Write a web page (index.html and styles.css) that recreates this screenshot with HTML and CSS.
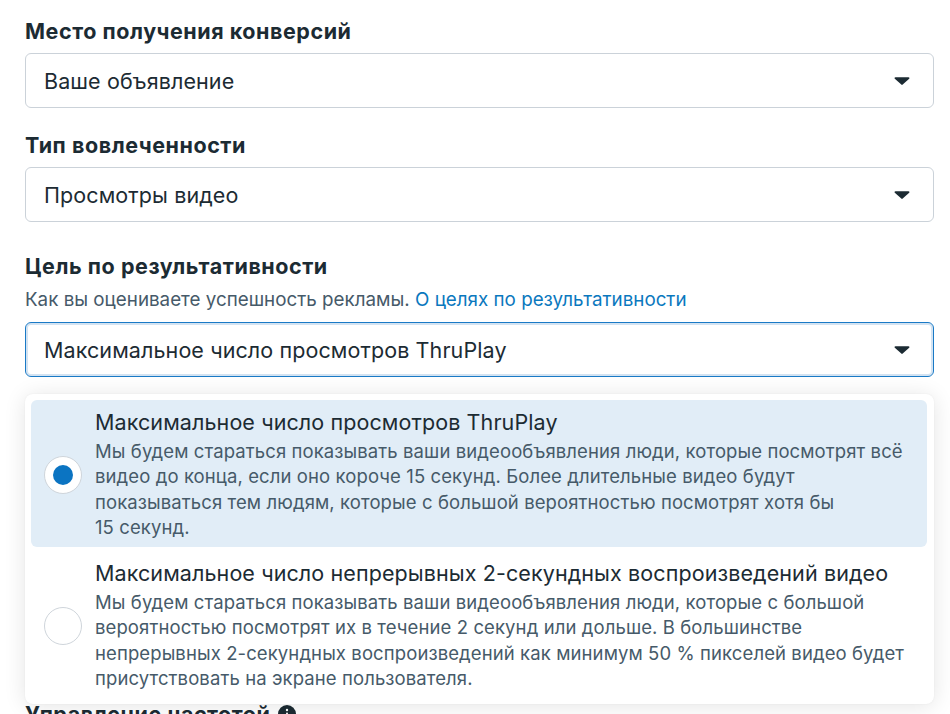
FILE: index.html
```html
<!DOCTYPE html>
<html lang="ru">
<head>
    <meta charset="UTF-8">
    <meta name="viewport" content="width=device-width, initial-scale=1.0">
    <title>Цель по результативности</title>
    <link rel="stylesheet" href="styles.css">
</head>
<body>
    <div class="panel">
        <div class="field">
            <div class="field-label">Место получения конверсий</div>
            <div class="select">
                <span>Ваше объявление</span>
                <svg class="caret" width="16" height="10" viewBox="0 0 16 10"><path d="M1.5 1.2h13c.9 0 1.3 1 .7 1.6L8.7 8.6c-.4.4-1 .4-1.4 0L.8 2.8C.2 2.2.6 1.2 1.5 1.2z"/></svg>
            </div>
        </div>

        <div class="field">
            <div class="field-label">Тип вовлеченности</div>
            <div class="select">
                <span>Просмотры видео</span>
                <svg class="caret" width="16" height="10" viewBox="0 0 16 10"><path d="M1.5 1.2h13c.9 0 1.3 1 .7 1.6L8.7 8.6c-.4.4-1 .4-1.4 0L.8 2.8C.2 2.2.6 1.2 1.5 1.2z"/></svg>
            </div>
        </div>

        <div class="field field-goal">
            <div class="field-label">Цель по результативности</div>
            <div class="field-hint">Как вы оцениваете успешность рекламы. <a href="#">О целях по результативности</a></div>
            <div class="dropdown">
                <div class="select select-open">
                    <span>Максимальное число просмотров ThruPlay</span>
                    <svg class="caret" width="16" height="10" viewBox="0 0 16 10"><path d="M1.5 1.2h13c.9 0 1.3 1 .7 1.6L8.7 8.6c-.4.4-1 .4-1.4 0L.8 2.8C.2 2.2.6 1.2 1.5 1.2z"/></svg>
                </div>

                <div class="menu">
                    <div class="option option-selected">
                        <span class="radio"><span class="radio-dot"></span></span>
                        <div class="option-text">
                            <div class="option-title">Максимальное число просмотров ThruPlay</div>
                            <div class="option-desc">Мы будем стараться показывать ваши видеообъявления люди, которые посмотрят всё видео до конца, если оно короче 15 секунд. Более длительные видео будут показываться тем людям, которые с большой вероятностью посмотрят хотя бы 15&nbsp;секунд.</div>
                        </div>
                    </div>
                    <div class="option">
                        <span class="radio"></span>
                        <div class="option-text">
                            <div class="option-title">Максимальное число непрерывных 2-секундных воспроизведений видео</div>
                            <div class="option-desc">Мы будем стараться показывать ваши видеообъявления люди, которые с большой вероятностью посмотрят их в течение 2 секунд или дольше. В большинстве непрерывных 2-секундных воспроизведений как минимум 50&nbsp;% пикселей видео будет присутствовать на экране пользователя.</div>
                        </div>
                    </div>
                </div>
            </div>
        </div>

        <div class="field">
            <div class="field-label">Управление частотой
                <svg class="info" width="18" height="18" viewBox="0 0 18 18"><circle cx="9" cy="9" r="9" fill="#1c2b33"/><rect x="8" y="7.5" width="2" height="6" rx="1" fill="#fff"/><circle cx="9" cy="5" r="1.2" fill="#fff"/></svg>
            </div>
        </div>
    </div>
</body>
</html>
```

FILE: styles.css
```css
body {
    margin: 0;
    background: #ffffff;
    font-family: Inter, "Noto Sans", "Liberation Sans", sans-serif;
    color: #1c2b33;
}

.panel {
    padding: 19px 16px 0 25px;
}

.field {
    margin-bottom: 25px;
}

.field-goal {
    margin-top: 32px;
    margin-bottom: 325px;
}

.field-label {
    font-size: 21.5px;
    font-weight: 700;
    letter-spacing: 0.55px;
    line-height: 24px;
    margin-bottom: 10px;
    display: flex;
    align-items: center;
    gap: 7px;
}

.field-hint {
    font-size: 18.8px;
    line-height: 24px;
    color: #465a69;
    margin-bottom: 10px;
}

.field-hint a {
    color: #0a78be;
    text-decoration: none;
}

.select {
    height: 55px;
    box-sizing: border-box;
    border: 1px solid #cbd2d9;
    border-radius: 6px;
    display: flex;
    align-items: center;
    justify-content: space-between;
    padding: 0 23px 0 18px;
    font-size: 21.5px;
    letter-spacing: 0.1px;
    background: #fff;
}

.select-open {
    border-color: #1a7ac6;
    box-shadow: inset 0 0 0 2px #d3e3f2;
}

.caret {
    fill: #1c2b33;
}

.dropdown {
    position: relative;
}

.menu {
    position: absolute;
    left: 0;
    right: 0;
    top: 72px;
    background: #fff;
    border-radius: 8px;
    padding: 6px 7px 6px 6px;
    box-shadow: 0 2px 22px rgba(0, 0, 0, 0.11), 0 0 2px rgba(0, 0, 0, 0.06);
    z-index: 2;
}

.option {
    display: flex;
    align-items: center;
    gap: 13px;
    padding: 9px 6px 7px 13px;
    border-radius: 6px;
}

.option + .option {
    margin-top: 4px;
}

.option-selected {
    background: #e1edf7;
}

.radio {
    flex: none;
    width: 38px;
    height: 38px;
    box-sizing: border-box;
    border-radius: 50%;
    border: 1px solid #cfd5db;
    background: #fff;
    display: flex;
    align-items: center;
    justify-content: center;
}

.radio-dot {
    width: 20px;
    height: 20px;
    border-radius: 50%;
    background: #0b74c2;
}

.option-text {
    flex: 1;
}

.option-title {
    font-size: 21.5px;
    letter-spacing: 0.1px;
    line-height: 26px;
    margin-bottom: 4px;
}

.option-desc {
    font-size: 18.5px;
    letter-spacing: 0.1px;
    line-height: 25.3px;
    color: #465a69;
}

.info {
    flex: none;
}
```
